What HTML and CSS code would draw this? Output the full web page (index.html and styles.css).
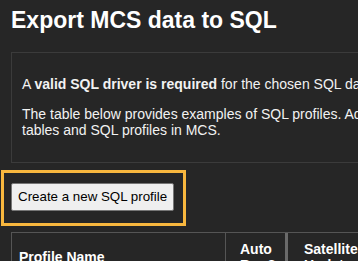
FILE: index.html
```html
<!DOCTYPE html>
<html lang="en">
<head>
<meta charset="utf-8">
<title>Export MCS data to SQL</title>
<link rel="stylesheet" href="styles.css">
</head>
<body>
<div class="page">
  <h1 class="title">Export MCS data to SQL</h1>
  <div class="notice">
    <p>A <b>valid SQL driver is required</b> for the chosen SQL database type.</p>
    <p>The table below provides examples of SQL profiles. Adapt them to your own database<br>tables and SQL profiles in MCS.</p>
  </div>
  <div class="highlight">
    <button class="btn" type="button">Create a new SQL profile</button>
  </div>
  <table class="profiles">
    <thead>
      <tr>
        <th class="c-name">Profile Name</th>
        <th class="c-auto">Auto Run?</th>
        <th class="c-sat">Satellite Update</th>
        <th class="c-db">Database Type</th>
      </tr>
    </thead>
    <tbody>
      <tr>
        <td class="c-name">Example MySQL</td>
        <td class="c-auto">No</td>
        <td class="c-sat">No</td>
        <td class="c-db">MySQL</td>
      </tr>
    </tbody>
  </table>
</div>
</body>
</html>
```
FILE: styles.css
```css
html, body {
  margin: 0;
  padding: 0;
  overflow: hidden;
  background: #262626;
}
body {
  font-family: "Liberation Sans", Arial, sans-serif;
  color: #f2f2f2;
}
.page {
  width: 900px;
  padding: 7px 0 0 11px;
}
.title {
  margin: 0 0 18px 0;
  font-size: 23px;
  font-weight: bold;
  color: #ffffff;
}
.notice {
  width: 700px;
  border: 1px solid #3b3b3b;
  padding: 9px 10px 10px 10px;
  font-size: 14px;
}
.notice p {
  margin: 14px 0;
}
.highlight {
  display: inline-block;
  margin: 7px 0 0 -10px;
  border: 3px solid #f8b73e;
  padding: 10px 9px 12px 7px;
}
.btn {
  display: block;
  font-family: "Liberation Sans", Arial, sans-serif;
  font-size: 13.333px;
  line-height: 16px;
  color: #000;
  background: #efefef;
  border: 1px solid #767676;
  border-radius: 2px;
  padding: 5px 6px;
  margin: 0;
}
.profiles {
  margin-top: 6px;
  width: 620px;
  table-layout: fixed;
  border-collapse: separate;
  border-spacing: 0;
  border-top: 1px solid #555555;
  border-left: 1px solid #555555;
  font-size: 14px;
}
.profiles th, .profiles td {
  box-sizing: border-box;
  text-align: left;
  vertical-align: middle;
  padding: 8px 8px 8px 7px;
  border-right: 1px solid #555555;
  border-bottom: 1px solid #555555;
  color: #ffffff;
}
.profiles th {
  font-weight: bold;
}
.c-name { width: 214px; }
.profiles .c-auto {
  width: 60px;
  padding-left: 14px;
  border-right-color: #6a6a6a;
}
.profiles .c-sat {
  width: 100px;
  padding-left: 16px;
  border-left: 2px solid #6a6a6a;
}
.c-db { width: 246px; }
```
